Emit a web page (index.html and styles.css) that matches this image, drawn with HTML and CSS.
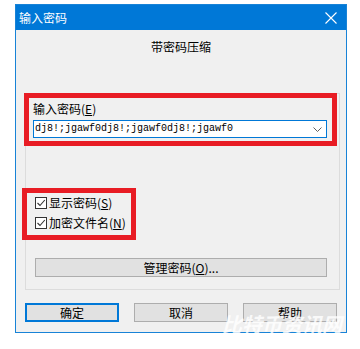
FILE: index.html
```html
<!DOCTYPE html>
<html lang="zh-CN">
<head>
<meta charset="utf-8">
<title>输入密码</title>
<link rel="stylesheet" href="styles.css">
</head>
<body>
<div class="win">
  <div class="titlebar">
    <span class="title">输入密码</span>
    <svg class="close" width="12" height="12" viewBox="0 0 12 12"><path d="M0.5 0.5L11.5 11.5M11.5 0.5L0.5 11.5" stroke="#fff" stroke-width="1.1" fill="none"/></svg>
  </div>
  <div class="client">
    <div class="heading">带密码压缩</div>
    <div class="group">
      <div class="mark mark-pw">
        <div class="label">输入密码(<u>E</u>)</div>
        <div class="combo">
          <span class="combo-text">dj8!;jgawf0dj8!;jgawf0dj8!;jgawf0</span>
          <svg class="chev" width="9" height="5" viewBox="0 0 9 5"><path d="M0.5 0.5L4.5 4.5L8.5 0.5" stroke="#606060" stroke-width="1" fill="none"/></svg>
        </div>
      </div>
      <div class="mark mark-opts">
        <div class="check"><span class="box"><svg width="10" height="10" viewBox="0 0 10 10"><path d="M1.5 5L4 7.5L8.8 2" stroke="#333" stroke-width="1.1" fill="none"/></svg></span>显示密码(<u>S</u>)</div>
        <div class="check"><span class="box"><svg width="10" height="10" viewBox="0 0 10 10"><path d="M1.5 5L4 7.5L8.8 2" stroke="#333" stroke-width="1.1" fill="none"/></svg></span>加密文件名(<u>N</u>)</div>
      </div>
      <div class="btn manage">管理密码(<u>O</u>)...</div>
    </div>
    <div class="buttons">
      <div class="btn default">确定</div>
      <div class="btn">取消</div>
      <div class="btn">帮助</div>
    </div>
  </div>
</div>
<div class="watermark">比特币资讯网</div>
</body>
</html>
```

FILE: styles.css
```css
* { box-sizing: border-box; }
html, body { margin: 0; padding: 0; background: #fff; }
body {
  font-family: "Noto Sans CJK SC", "Liberation Sans", sans-serif;
  font-size: 12px;
  color: #000;
  width: 360px;
  height: 349px;
  overflow: hidden;
}
u { text-decoration: underline; text-underline-offset: 1px; }

.win {
  margin: 4px 0 0 15px;
  width: 332px;
  height: 329px;
  border: 1px solid #1883d7;
  background: #f0f0f0;
  display: flex;
  flex-direction: column;
}
.titlebar {
  flex: none;
  height: 25px;
  background: #0078d7;
  color: #fff;
  display: flex;
  align-items: center;
  justify-content: space-between;
  padding: 0 9px 0 3px;
}
.title { font-size: 12px; line-height: 14px; }
.close { display: block; }

.client {
  flex: 1;
  display: flex;
  flex-direction: column;
  align-items: flex-start;
}
.heading {
  align-self: stretch;
  margin-top: 10px;
  line-height: 14px;
  text-align: center;
}
.group {
  margin: 39px 0 0 9px;
  width: 315px;
  height: 197px;
  border: 1px solid #dcdcdc;
  display: flex;
  flex-direction: column;
  align-items: flex-start;
}
.mark { border: 5px solid #e81c24; }
.mark-pw {
  margin: -1px 0 0 -2px;
  width: 313px;
  height: 53px;
  padding: 4px 0 0 4px;
}
.label { line-height: 14px; margin-bottom: 4px; }
.combo {
  width: 294px;
  height: 18px;
  border: 1px solid #0078d7;
  background: #fff;
  display: flex;
  align-items: center;
  justify-content: space-between;
  padding: 0 4px 0 1px;
}
.combo-text {
  font-family: "Liberation Mono", "DejaVu Sans Mono", monospace;
  font-size: 10px;
  line-height: 12px;
}
.chev { display: block; }

.mark-opts {
  margin: 42px 0 0 -4px;
  width: 114px;
  height: 52px;
  padding: 4px 0 0 8px;
  display: flex;
  flex-direction: column;
  gap: 8px;
}
.check {
  display: flex;
  align-items: center;
  height: 12px;
  line-height: 14px;
  white-space: nowrap;
}
.box {
  flex: none;
  width: 12px;
  height: 12px;
  border: 1px solid #333;
  background: #fff;
  margin-right: 2px;
  display: flex;
  align-items: center;
  justify-content: center;
}
.box svg { display: block; }

.btn {
  height: 19px;
  background: #e1e1e1;
  border: 1px solid #adadad;
  display: flex;
  align-items: center;
  justify-content: center;
  line-height: 14px;
}
.manage {
  margin: 18px 0 0 9px;
  width: 292px;
}
.buttons {
  margin: 13px 0 0 9px;
  display: flex;
  gap: 15px;
}
.buttons .btn { width: 94px; }
.btn.default { border: 2px solid #0078d7; }

.watermark {
  position: absolute;
  left: 222px;
  top: 311px;
  font-size: 20px;
  line-height: 26px;
  font-weight: bold;
  font-style: italic;
  color: rgba(255, 255, 255, 0.82);
  white-space: nowrap;
}
```
